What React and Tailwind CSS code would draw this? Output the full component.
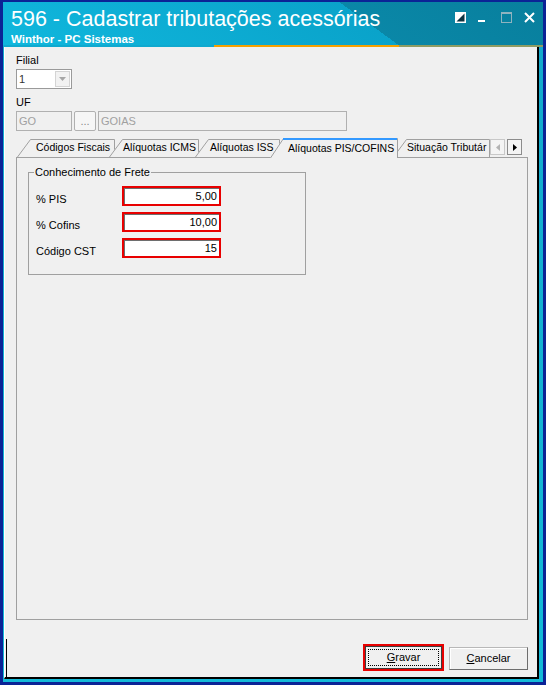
import React from "react";

// tab outline: slanted left edge, flat top, straight right edge
const TabShape = ({ w, selected }) => {
  const h = selected ? 20 : 19;
  const t = selected ? 0.5 : 1.5;
  return (
    <svg className="absolute left-0 top-0" width={w} height={h}>
      <path d={`M0 ${h} L13 ${t} L${w - 0.5} ${t} L${w - 0.5} ${h} Z`} fill="#f0f0f0" />
      <path
        d={`M0.5 ${h} L13.5 ${t} L${w - 0.5} ${t} L${w - 0.5} ${h}`}
        fill="none"
        stroke="#a0a0a0"
      />
      {selected && <path d={`M13 1 L${w - 1} 1`} stroke="#3399ff" strokeWidth="2" />}
    </svg>
  );
};

const Tab = ({ label, w, selected, className }) => (
  <div className={`relative shrink-0 overflow-hidden ${className}`}>
    <TabShape w={w} selected={selected} />
    <span className="relative block whitespace-nowrap text-[10.5px] leading-[13px]">{label}</span>
  </div>
);

const TitleBar = () => (
  <div className="h-[43px] flex justify-between bg-[linear-gradient(36deg,#10b7dd_0%,#0aa3ca_66%,#0a87a7_66%,#087f9d_100%)]">
    <div className="flex flex-col pt-[7px] pl-[8px] text-white">
      <span className="text-[21.5px] leading-[21.5px]">596 - Cadastrar tributações acessórias</span>
      <span className="mt-[2px] text-[11.5px] leading-[13px] font-bold">Winthor - PC Sistemas</span>
    </div>
    <div className="flex items-start pt-[10px] pr-[8px]">
      <svg width="11" height="11">
        <rect x="0.5" y="0.5" width="10" height="10" fill="#fff" stroke="#fff" />
        <path d="M9.5 1.5 L9.5 9.5 L1.5 9.5 Z" fill="#0c3340" />
      </svg>
      <svg width="11" height="11" className="ml-[11px]">
        <rect x="1" y="8" width="7" height="2" fill="#fff" />
      </svg>
      <svg width="11" height="11" className="ml-[13px]">
        <rect x="0.5" y="0.5" width="10" height="10" fill="none" stroke="#8fb3bf" />
        <rect x="0" y="0" width="11" height="2" fill="#8fb3bf" />
      </svg>
      <svg width="11" height="11" className="ml-[12px]">
        <path d="M1 1 L10 10 M10 1 L1 10" stroke="#fff" strokeWidth="2" />
      </svg>
    </div>
  </div>
);

const RedInput = ({ value }) => (
  <div className="w-[99px] h-[20px] border-2 border-[#e80000] bg-white flex items-center justify-end pr-[2px] shadow-[inset_1px_1px_0_#6e6e6e]">
    <span className="leading-[13px]">{value}</span>
  </div>
);

const Row = ({ label, value }) => (
  <div className="flex items-end">
    <span className="w-[86px] leading-[13px]">{label}</span>
    <RedInput value={value} />
  </div>
);

export default function App() {
  return (
    <div className="w-[546px] h-[685px] bg-[#0b2396] pl-[3px] pr-[3px] pt-[2px] pb-[3px] flex font-['Liberation_Sans',Arial,sans-serif]">
      <div className="flex-1 flex flex-col bg-[linear-gradient(to_bottom,#13a8cb,#14bad8)]">
        <TitleBar />
        <div className="h-[2px] flex">
          <div className="w-[211px] bg-[#0fa9cf]" />
          <div className="w-[185px] bg-[#f6a100]" />
          <div className="flex-1 bg-[#8f9c63]" />
        </div>

        <div className="flex-1 ml-[1px] mr-[4px] mb-[3px] bg-[#f0f0f0] border-l border-l-white border-r-2 border-r-black border-b-2 border-b-black flex flex-col pt-[7px] pl-[11px] pr-[9px] text-[11px] leading-[13px] text-black">
          <span>Filial</span>
          <div className="mt-[2px] w-[56px] h-[20px] border border-[#9a9a9a] bg-white flex items-center justify-between pl-[2px] pr-[1px]">
            <span className="text-[#333]">1</span>
            <div className="w-[15px] h-[16px] border border-[#d4d4d4] bg-[#f2f2f2] flex items-center justify-center">
              <svg width="7" height="4">
                <path d="M0 0 L7 0 L3.5 4 Z" fill="#a6a6a6" />
              </svg>
            </div>
          </div>

          <span className="mt-[7px]">UF</span>
          <div className="mt-[2px] flex gap-[2px] h-[20px]">
            <div className="w-[56px] border border-[#b0b0b0] flex items-center pl-[2px] text-[#a0a0a0]">GO</div>
            <div className="w-[22px] border border-[#b0b0b0] rounded-[2px] bg-[#f6f6f6] flex items-center justify-center text-[#8a8a8a]">...</div>
            <div className="w-[249px] border border-[#b0b0b0] flex items-center pl-[2px] text-[#a0a0a0]">GOIAS</div>
          </div>

          {/* tab strip */}
          <div className="mt-[7px] h-[19px] flex items-end">
            <Tab label="Códigos Fiscais" w={98} className="ml-[1px] w-[98px] h-[19px] z-[1] pl-[19px] pt-[3px]" />
            <Tab label="Alíquotas ICMS" w={90} className="ml-[-6px] w-[90px] h-[19px] z-[2] pl-[14px] pt-[3px]" />
            <Tab label="Alíquotas ISS" w={85} className="ml-[-4px] w-[85px] h-[19px] z-[3] pl-[15px] pt-[3px]" />
            <Tab label="Alíquotas PIS/COFINS" w={128} selected className="ml-[-10px] w-[128px] h-[20px] mb-[-1px] z-[5] pl-[18px] pt-[4px]" />
            <Tab label="Situação Tributár" w={97} className="ml-[-5px] w-[97px] h-[19px] z-[4] pl-[14px] pt-[3px]" />
            <div className="relative z-[6] self-start mt-[1px] flex gap-[2px] bg-[#f0f0f0]">
              <div className="w-[15px] h-[16px] border border-[#c8c8c8] bg-[#f4f4f4] flex items-center justify-center">
                <svg width="4" height="7">
                  <path d="M4 0 L4 7 L0 3.5 Z" fill="#b4b4b4" />
                </svg>
              </div>
              <div className="w-[15px] h-[16px] border border-[#8c8c8c] bg-[#f4f4f4] flex items-center justify-center">
                <svg width="4" height="7">
                  <path d="M0 0 L0 7 L4 3.5 Z" fill="#000" />
                </svg>
              </div>
            </div>
          </div>

          {/* tab page */}
          <div className="h-[463px] border border-[#a0a0a0] pl-[11px]">
            <fieldset className="mt-[8px] w-[278px] border border-[#a0a0a0] pl-[7px] pt-[7px] pb-[16px] flex flex-col gap-[6px]">
              <legend className="ml-[-2px] px-[1px] leading-[13px]">Conhecimento de Frete</legend>
              <Row label="% PIS" value="5,00" />
              <Row label="% Cofins" value="10,00" />
              <Row label="Código CST" value="15" />
            </fieldset>
          </div>

          {/* buttons */}
          <div className="mt-[19px] h-[38px] ml-[-10px] mr-[-9px] border-l border-l-black flex justify-end items-start pt-[5px] pr-[9px]">
            <div className="w-[81px] h-[27px] border-2 border-[#e80000]">
              <div className="w-full h-full border border-[#3c3c3c] bg-[#f0f0f0] p-[2px]">
                <div className="w-full h-full border border-dotted border-black flex items-center justify-center">
                  <span>
                    <span className="underline">G</span>ravar
                  </span>
                </div>
              </div>
            </div>
            <div className="ml-[5px] mt-[3px] w-[79px] h-[23px] border border-[#b8b8b8] border-r-[#6e6e6e] border-b-[#6e6e6e] bg-[#f0f0f0] shadow-[inset_1px_1px_0_#ffffff] flex items-center justify-center">
              <span>
                <span className="underline">C</span>ancelar
              </span>
            </div>
          </div>
        </div>
      </div>
    </div>
  );
}
